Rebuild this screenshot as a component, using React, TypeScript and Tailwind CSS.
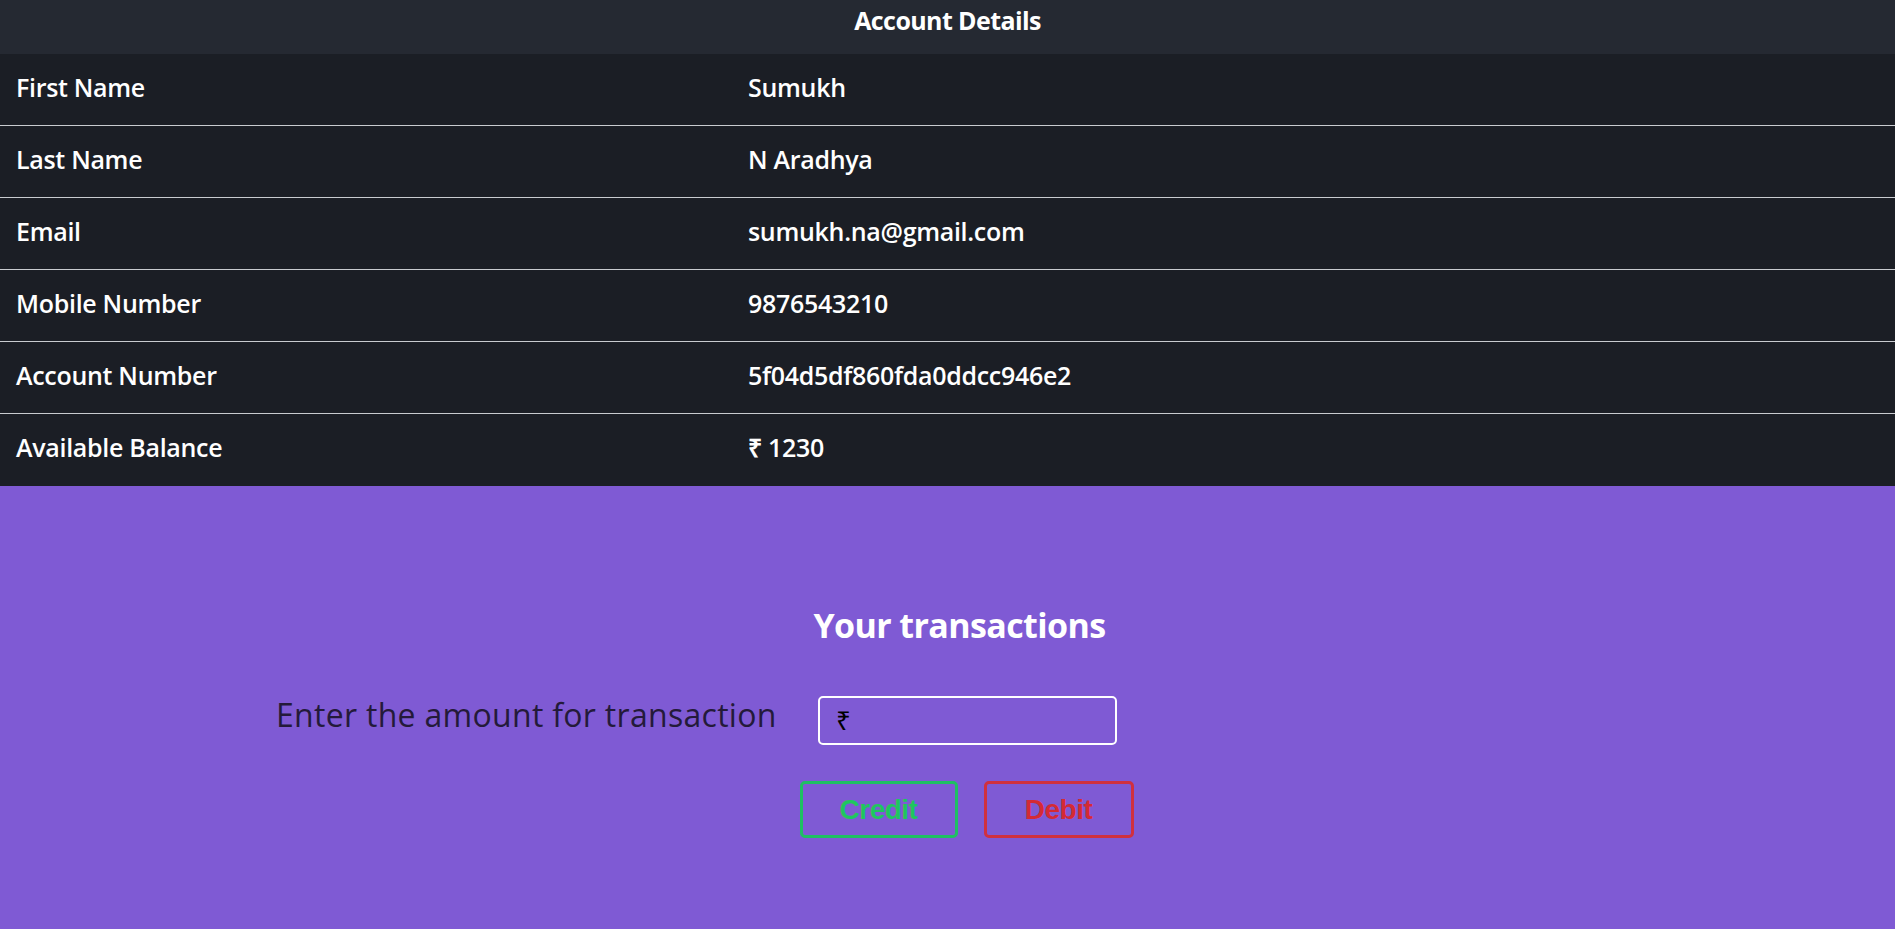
import React from "react";

const rows: [string, string][] = [
  ["First Name", "Sumukh"],
  ["Last Name", "N Aradhya"],
  ["Email", "sumukh.na@gmail.com"],
  ["Mobile Number", "9876543210"],
  ["Account Number", "5f04d5df860fda0ddcc946e2"],
  ["Available Balance", "₹ 1230"],
];

const App = () => {
  return (
    <div className="min-h-[929px] bg-[#7f5ad4] font-['Open_Sans',sans-serif]">
      <div className="h-[54px] bg-[#252932] flex justify-center pt-[2px]">
        <h3 className="text-[25px] font-bold text-white tracking-[-0.6px]">Account Details</h3>
      </div>
      <div className="bg-[#1b1e25]">
        {rows.map(([label, value], i) => (
          <div
            key={label}
            className={`grid grid-cols-[732px_1fr] h-[72px] items-center pb-[4px] text-[25px] font-semibold text-white tracking-[-0.3px] ${
              i < rows.length - 1 ? "border-b border-[#c9cbd0]" : ""
            }`}
          >
            <div className="pl-4">{label}</div>
            <div className="pl-4">{value}</div>
          </div>
        ))}
      </div>
      <section className="flex flex-col pt-[122px]">
        <h2 className="self-center ml-[24px] text-[34px] font-bold text-white tracking-[-0.6px] leading-none">
          Your transactions
        </h2>
        <div className="flex items-center mt-[54px] pl-[276px]">
          <label className="w-[542px] -mt-[12px] text-[32px] text-[#241a3a] tracking-[0.3px]">
            Enter the amount for transaction
          </label>
          <div className="w-[299px] h-[49px] border-2 border-white rounded-[5px] flex items-center pl-4 text-[26px] text-black">
            ₹
          </div>
        </div>
        <div className="self-center flex gap-[26px] mt-[36px] ml-[38px] font-['Liberation_Sans',sans-serif]">
          <button className="w-[158px] h-[57px] border-[3px] border-[#1fbf63] rounded-[5px] text-[28px] font-bold text-[#1fc65f] tracking-[-0.5px]">
            Credit
          </button>
          <button className="w-[150px] h-[57px] border-[3px] border-[#d0303f] rounded-[5px] text-[28px] font-bold text-[#d42a35] tracking-[-0.5px]">
            Debit
          </button>
        </div>
      </section>
    </div>
  );
};

export default App;
